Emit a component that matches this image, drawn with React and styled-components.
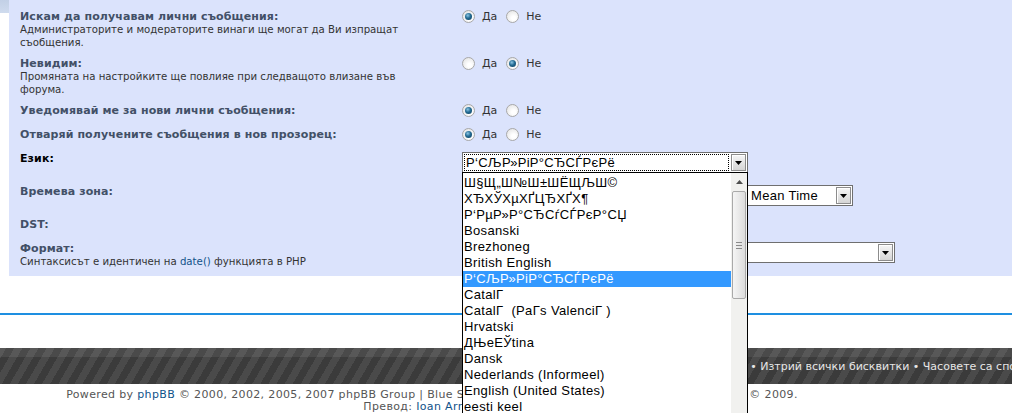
import React from 'react';
import styled, { createGlobalStyle } from 'styled-components';

const languages = [
  'Ш§Щ„Ш№Ш±ШЁЩЉШ©',
  'ХЂХЎХµХҐЦЂХҐХ¶',
  'Р‘РµР»Р°СЂСѓСЃРєР°СЏ',
  'Bosanski',
  'Brezhoneg',
  'British English',
  'Р‘СЉР»РіР°СЂСЃРєРё',
  'CatalГ\u00a0',
  'CatalГ\u00a0 (PaГ\u00ads ValenciГ\u00a0)',
  'Hrvatski',
  'ДЊeЕЎtina',
  'Dansk',
  'Nederlands (Informeel)',
  'English (United States)',
  'eesti keel',
  'Suomi',
];

function App() {
  return (
    <Page>
      <GlobalStyle />
      <Top>
        <Gutter>
          <GutterCap />
        </Gutter>
        <Panel>
          <Row>
            <Dt>
              <Label>Искам да получавам лични съобщения:</Label>
              <Desc>Администраторите и модераторите винаги ще могат да Ви изпращат съобщения.</Desc>
            </Dt>
            <Dd>
              <YesNo yes />
            </Dd>
          </Row>
          <Row>
            <Dt>
              <Label>Невидим:</Label>
              <Desc>Промяната на настройките ще повлияе при следващото влизане във форума.</Desc>
            </Dt>
            <Dd>
              <YesNo />
            </Dd>
          </Row>
          <Row>
            <Dt>
              <Label>Уведомявай ме за нови лични съобщения:</Label>
            </Dt>
            <Dd>
              <YesNo yes />
            </Dd>
          </Row>
          <Row>
            <Dt>
              <Label>Отваряй получените съобщения в нов прозорец:</Label>
            </Dt>
            <Dd>
              <YesNo yes />
            </Dd>
          </Row>
          <Row>
            <Dt>
              <Label $active>Език:</Label>
            </Dt>
            <Dd>
              <SelectWrap>
                <Select width={286} value="Р‘СЉР»РіР°СЂСЃРєРё" focused />
                <DropList>
                  <Options>
                    {languages.map((l, i) => (
                      <Option key={i} $selected={i === 6}>{l}</Option>
                    ))}
                  </Options>
                  <ScrollBar>
                    <ScrollArrow>
                      <svg width="7" height="4" viewBox="0 0 7 4">
                        <path d="M0 4 L3.5 0 L7 4 Z" fill="#4d4d4d" />
                      </svg>
                    </ScrollArrow>
                    <Thumb>
                      <Grip />
                    </Thumb>
                  </ScrollBar>
                </DropList>
              </SelectWrap>
            </Dd>
          </Row>
          <Row>
            <Dt>
              <Label>Времева зона:</Label>
            </Dt>
            <Dd>
              <Select width={391} value="[UTC] Западноевропейско време, Greenwich Mean Time" />
            </Dd>
          </Row>
          <Row>
            <Dt>
              <Label>DST:</Label>
            </Dt>
            <Dd>
              <YesNo />
            </Dd>
          </Row>
          <Row>
            <Dt>
              <Label>Формат:</Label>
              <Desc>
                Синтаксисът е идентичен на <Link>date()</Link> функцията в PHP
              </Desc>
            </Dt>
            <Dd>
              <Select width={433} value="D M d, Y g:i a" />
            </Dd>
          </Row>
        </Panel>
      </Top>
      <BlueLine />
      <NavBar>
        <NavText>Екипа • Изтрий всички бисквитки • Часовете са според UTC + 2 часа</NavText>
      </NavBar>
      <Copyright>
        <div>
          Powered by <Link>phpBB</Link> © 2000, 2002, 2005, 2007 phpBB Group | Blue Stripe Style by Ioan Arnaudov for phpBB-BG.com  © 2009.
        </div>
        <div>
          Превод: <Link>Ioan Arnaudov</Link>
        </div>
      </Copyright>
    </Page>
  );
}

function YesNo({ yes }) {
  return (
    <RadioGroup>
      <Radio $checked={!!yes} />
      <RadioLabel>Да</RadioLabel>
      <Radio $checked={!yes} />
      <RadioLabel>Не</RadioLabel>
    </RadioGroup>
  );
}

function Select({ width, value, focused }) {
  return (
    <SelectBox style={{ width }}>
      <SelectText $focused={focused}>{value}</SelectText>
      <SelectButton>
        <svg width="7" height="4" viewBox="0 0 7 4">
          <path d="M0 0 L7 0 L3.5 4 Z" fill="#000" />
        </svg>
      </SelectButton>
    </SelectBox>
  );
}

export default App;

const GlobalStyle = createGlobalStyle`
  html, body {
    margin: 0;
    padding: 0;
    background: #fff;
    overflow: hidden;
  }
  body {
    font-family: "DejaVu Sans", Verdana, sans-serif;
  }
`;

const Page = styled.div`
  width: 1012px;
  height: 413px;
  overflow: hidden;
  background: #fff;
`;

const Top = styled.div`
  display: flex;
`;

const Gutter = styled.div`
  width: 9px;
  flex: none;
`;

const GutterCap = styled.div`
  height: 13px;
  background: linear-gradient(to bottom, #c2d0e6, #cfdbee);
`;

const Panel = styled.div`
  flex: 1;
  background: #dbe3fc;
  padding: 10px 0 0 11px;
`;

const Row = styled.div`
  display: flex;
  align-items: flex-start;
  padding-bottom: 8px;
`;

const Dt = styled.div`
  width: 442px;
  flex: none;
`;

const Dd = styled.div`
  flex: 1;
`;

const Label = styled.div`
  font-size: 11px;
  line-height: 13px;
  font-weight: bold;
  letter-spacing: 0.1px;
  color: ${(p) => (p.$active ? '#000' : '#425067')};
`;

const Desc = styled.div`
  font-size: 10.2px;
  line-height: 13px;
  color: #333;
  width: 410px;
`;

const Link = styled.span`
  color: #105289;
`;

const RadioGroup = styled.div`
  display: flex;
  align-items: center;
  height: 16px;
  padding-bottom: 3px;
  box-sizing: border-box;
`;

const Radio = styled.span`
  width: 13px;
  height: 13px;
  box-sizing: border-box;
  border-radius: 50%;
  border: 1px solid #a8a8a8;
  background: radial-gradient(circle at 60% 65%, #ffffff 20%, #dedede 100%);
  display: flex;
  align-items: center;
  justify-content: center;
  &::after {
    content: '';
    display: ${(p) => (p.$checked ? 'block' : 'none')};
    width: 7px;
    height: 7px;
    border-radius: 50%;
    background: radial-gradient(circle at 40% 35%, #8cc6e4 0%, #236b93 45%, #0c3a57 100%);
  }
`;

const RadioLabel = styled.span`
  font-size: 11px;
  color: #333;
  margin: 0 9px 0 7px;
  line-height: 13px;
`;

const SelectWrap = styled.div`
  position: relative;
  width: 286px;
`;

const SelectBox = styled.div`
  display: flex;
  height: 21px;
  box-sizing: border-box;
  border: 1px solid #6f6f6f;
  background: #fff;
  margin-bottom: 4px;
`;

const SelectText = styled.div`
  flex: 1;
  min-width: 0;
  margin: 1px;
  padding-left: 1px;
  border: 1px ${(p) => (p.$focused ? 'dotted #000' : 'solid transparent')};
  font-family: "Liberation Sans", Arial, sans-serif;
  font-size: 13px;
  line-height: 15px;
  letter-spacing: 0.3px;
  color: #000;
  white-space: nowrap;
  overflow: hidden;
`;

const SelectButton = styled.div`
  width: 15px;
  flex: none;
  margin: 1px;
  box-sizing: border-box;
  border: 1px solid #8c8c8c;
  box-shadow: inset 1px 1px 0 #fff;
  background: linear-gradient(to bottom, #f6f6f6, #d5d5d5);
  display: flex;
  align-items: center;
  justify-content: center;
`;

const DropList = styled.div`
  position: absolute;
  top: 20px;
  left: 0;
  width: 286px;
  height: 260px;
  box-sizing: border-box;
  border: 1px solid #000;
  background: #fff;
  display: flex;
  z-index: 10;
`;

const Options = styled.div`
  flex: 1;
  padding-top: 2px;
  overflow: hidden;
`;

const Option = styled.div`
  height: 16px;
  line-height: 16px;
  padding-left: 1px;
  font-family: "Liberation Sans", Arial, sans-serif;
  font-size: 13px;
  letter-spacing: 0.35px;
  white-space: nowrap;
  color: ${(p) => (p.$selected ? '#fff' : '#000')};
  background: ${(p) => (p.$selected ? '#3399ff' : 'transparent')};
`;

const ScrollBar = styled.div`
  width: 16px;
  flex: none;
  background: #f1f1ef;
  display: flex;
  flex-direction: column;
  align-items: center;
`;

const ScrollArrow = styled.div`
  height: 18px;
  display: flex;
  align-items: center;
  justify-content: center;
`;

const Thumb = styled.div`
  width: 14px;
  height: 108px;
  box-sizing: border-box;
  border: 1px solid #a9a9a9;
  border-radius: 2px;
  background: linear-gradient(to right, #f5f5f5, #dcdcdc);
  display: flex;
  align-items: center;
  justify-content: center;
`;

const Grip = styled.div`
  width: 6px;
  height: 5px;
  border-top: 1px solid #8a8a8a;
  border-bottom: 1px solid #8a8a8a;
  position: relative;
  &::after {
    content: '';
    position: absolute;
    left: 0;
    right: 0;
    top: 2px;
    border-top: 1px solid #8a8a8a;
  }
`;

const BlueLine = styled.div`
  height: 2px;
  margin-top: 37px;
  background: #1e8fe1;
`;

const NavBar = styled.div`
  margin-top: 33px;
  height: 36px;
  display: flex;
  align-items: center;
  padding-left: 712px;
  background:
    linear-gradient(to bottom, rgba(255, 255, 255, 0.08) 0, rgba(255, 255, 255, 0.08) 9px, rgba(0, 0, 0, 0) 9px),
    repeating-linear-gradient(-60deg, #3b3b3b 0, #3b3b3b 7px, #4a4a4a 7px, #4a4a4a 14px);
  overflow: hidden;
  white-space: nowrap;
`;

const NavText = styled.span`
  font-size: 11px;
  color: #e6e6e6;
`;

const Copyright = styled.div`
  width: 864px;
  padding-top: 5px;
  text-align: center;
  font-size: 11px;
  letter-spacing: 0.35px;
  line-height: 12px;
  color: #555;
  white-space: pre;
`;
